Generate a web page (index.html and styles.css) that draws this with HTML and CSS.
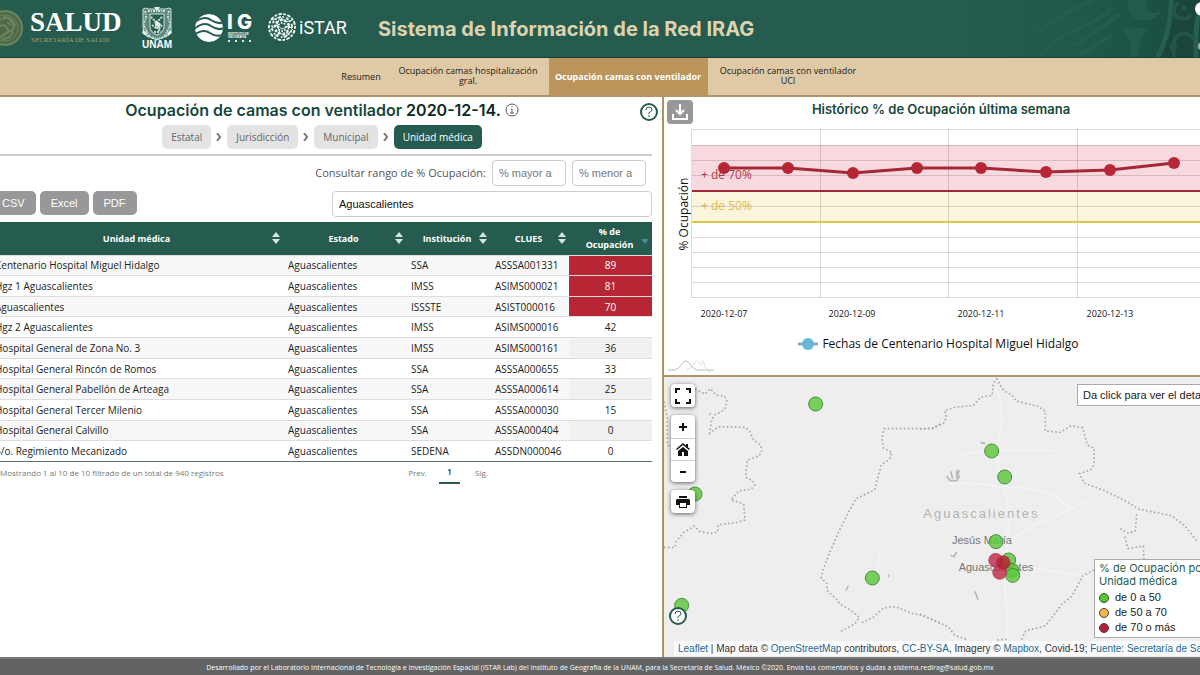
FILE: index.html
```html
<!DOCTYPE html>
<html lang="es">
<head>
<meta charset="utf-8">
<meta name="viewport" content="width=device-width, initial-scale=1">
<title>Sistema de Información de la Red IRAG</title>
<link rel="stylesheet" href="styles.css">
</head>
<body>
<header class="banner">
  <svg class="banner-art" viewBox="0 0 240 58" aria-hidden="true">
    <defs><linearGradient id="shade"><stop offset="0" stop-color="#265c4f"/><stop offset=".55" stop-color="#20574a"/><stop offset="1" stop-color="#184b40"/></linearGradient></defs>
    <path fill="url(#shade)" d="M0 0h240v58H0z"/>
    <g fill="none" stroke="#245d4f" stroke-width="4">
      <path d="M72 34Q90 22 104 14T132 0M76 58Q96 36 118 28T150 8M112 46Q134 34 158 14M118 56L150 36"/>
    </g>
    <path fill="#235c4e" d="M167 0q-2 18 12 20t22-8q-12 4-16-4V0zM160 29h28q-10 8-11 29h-8q4-16-9-29z"/>
    <path fill="#1b443b" d="M213 0h27v58h-38q8-24 11-58z"/>
    <path fill="none" stroke="#265f51" stroke-width="5" d="M211 0q-1 34-14 58M239 10q-4 22-3 48"/>
    <path fill="none" stroke="#23564a" stroke-width="4" d="M218 2q-9 12 0 16q9 3 13-3M214 58q-4-24 10-24q7 1 10 6"/>
    <circle cx="224" cy="8" r="3" fill="#23564a"/><circle cx="213" cy="48" r="4" fill="#23564a"/>
    <circle cx="242" cy="9" r="7" fill="#fff"/><circle cx="242" cy="47" r="4" fill="#9fb3aa"/>
  </svg>
  <svg class="logos" viewBox="0 0 360 58" role="img" aria-label="Salud, UNAM, Instituto de Geografía, iSTAR">
    <g fill="none" stroke="#71835a">
      <circle cx="5" cy="28" r="17" fill="#4b6a49" stroke-width="2"/>
      <circle cx="5" cy="28" r="13" stroke-width="1"/>
      <path stroke-width="2" d="M0 20q8-5 12 2t-2 9q-7 3-10 7M3 17q10 0 12 9M-1 27q5-4 8 1t-5 8M13 31q-2 8-11 8M7 22l4 3"/>
    </g>
    <text class="logo-salud" x="30" y="31">SALUD</text>
    <text class="logo-salud-sub" x="31" y="42">SECRETARÍA DE SALUD</text>
    <g fill="none" stroke="#cfe0da">
      <path fill="#5d887c" stroke-width="1" d="M143 9q3-2 5 0h18q3-2 5 0v17q1 7-4 10l-10 4-10-4q-5-4-4-10z"/>
      <path stroke-width="2" stroke-dasharray="2 1 1 1" d="M145 11q2 5 0 9t0 8 5 9M169 11q-2 5 0 9t0 8-5 9M148 11h18M147 36l10 3 10-3"/>
      <path fill="#285e50" d="M150 14h14v13q-1 6-7 8-6-2-7-8z"/>
      <path stroke-width="2" stroke-dasharray="2 1" d="M151 17l4 4 2 7 4 4M162 17l-4 4M152 25l4 3M162 25l-3 4M154 32h6"/>
      <path fill="#e8f2ee" stroke="none" d="M156 20l5 4-2 4-4-3zM154 7h6l-3 4zM143 30l4 3-1 3-4-3zM171 30l-4 3 1 3 4-3z"/>
    </g>
    <text class="logo-unam" x="142" y="48">UNAM</text>
    <clipPath id="globe"><circle cx="209" cy="28" r="14"/></clipPath>
    <g clip-path="url(#globe)">
      <circle cx="209" cy="28" r="14" fill="#fff"/>
      <path fill="none" stroke="#265c4f" stroke-width="2" d="M194 23q10-8 17-3t13 2M194 29q10-8 17-3t13 2M194 35q9-7 16-2t14 1"/>
    </g>
    <text class="logo-ig" x="227" y="29">I</text><text class="logo-ig" x="237" y="29">G</text>
    <text class="logo-tiny" x="228" y="35">INSTITUTO DE</text><text class="logo-tiny" x="228" y="38">GEOGRAFÍA</text>
    <path stroke="#dce9e4" stroke-width="2" stroke-dasharray="2 5" d="M228 41h24"/>
    <g fill="none" stroke="#eef6f3" stroke-linecap="round">
      <circle cx="282" cy="27" r="13" stroke-width="2" stroke-dasharray="1 3 2 3"/>
      <circle cx="282" cy="27" r="10" stroke-width="2" stroke-dasharray="0 4 1 3"/>
      <circle cx="282" cy="27" r="7" stroke-width="3" stroke-dasharray="0 5 0 4"/>
      <circle cx="282" cy="27" r="4" stroke-width="2" stroke-dasharray="0 3"/>
      <path stroke-width="1" d="M272 20l8-3 6 5 6-2M271 29l6-4 5 4 7-3 4 4M275 36l5-3 6 4 4-5M280 17l-3 8 3 8M289 26l-3 11"/>
    </g>
    <text class="logo-istar" x="299" y="34">iSTAR</text>
  </svg>
  <h1 class="banner-title">Sistema de Información de la Red IRAG</h1>
</header>
<nav class="tabs">
  <a class="tab tab-short" href="#resumen">Resumen</a>
  <a class="tab" href="#hospitalizacion">Ocupación camas hospitalización gral.</a>
  <a class="tab tab-active" href="#ventilador">Ocupación camas con ventilador</a>
  <a class="tab" href="#uci">Ocupación camas con ventilador UCI</a>
</nav>
<main class="board">
  <section class="listing">
    <button class="help" type="button" aria-label="Ayuda"><svg viewBox="0 0 18 18"><circle cx="9" cy="9" r="8"/><path d="M6 7q0-3 3-3t3 3q0 1-2 2t-1 2M9 12v2"/></svg></button>
    <h2 class="title">Ocupación de camas con ventilador <span class="title-date">2020-12-14.</span>
      <svg class="info" viewBox="0 0 14 14" aria-hidden="true"><circle cx="7" cy="7" r="6"/><path d="M7 3v1M6 6h1v4M5 10h4"/></svg></h2>
    <div class="levels">
      <button class="level" type="button">Estatal</button><svg class="chevron" viewBox="0 0 6 8"><path d="M1 0l3 4-3 4"/></svg>
      <button class="level" type="button">Jurisdicción</button><svg class="chevron" viewBox="0 0 6 8"><path d="M1 0l3 4-3 4"/></svg>
      <button class="level" type="button">Municipal</button><svg class="chevron" viewBox="0 0 6 8"><path d="M1 0l3 4-3 4"/></svg>
      <button class="level level-active" type="button">Unidad médica</button>
    </div>
    <div class="range">
      <label for="min">Consultar rango de % Ocupación:</label>
      <input class="field" id="min" placeholder="% mayor a">
      <input class="field" id="max" placeholder="% menor a" aria-label="% menor a">
    </div>
    <div class="tools">
      <button class="export" type="button">CSV</button><button class="export" type="button">Excel</button><button class="export" type="button">PDF</button>
      <input class="field search" type="text" value="Aguascalientes" aria-label="Buscar">
    </div>
    <table class="units">
      <colgroup><col><col class="c-state"><col class="c-inst"><col class="c-clues"><col class="c-occ"></colgroup>
      <thead><tr>
        <th>Unidad médica<svg class="sort" viewBox="0 0 8 12"><path d="M4 0l4 5H0zM4 12l4-5H0z"/></svg></th>
        <th>Estado<svg class="sort" viewBox="0 0 8 12"><path d="M4 0l4 5H0zM4 12l4-5H0z"/></svg></th>
        <th>Institución<svg class="sort" viewBox="0 0 8 12"><path d="M4 0l4 5H0zM4 12l4-5H0z"/></svg></th>
        <th>CLUES<svg class="sort" viewBox="0 0 8 12"><path d="M4 0l4 5H0zM4 12l4-5H0z"/></svg></th>
        <th>% de Ocupación<svg class="sort sort-on" viewBox="0 0 8 12"><path d="M4 12l4-5H0z"/></svg></th>
      </tr></thead>
      <tbody>
        <tr><td>Centenario Hospital Miguel Hidalgo</td><td>Aguascalientes</td><td>SSA</td><td>ASSSA001331</td><td class="high">89</td></tr>
        <tr><td>Hgz 1 Aguascalientes</td><td>Aguascalientes</td><td>IMSS</td><td>ASIMS000021</td><td class="high">81</td></tr>
        <tr><td>Aguascalientes</td><td>Aguascalientes</td><td>ISSSTE</td><td>ASIST000016</td><td class="high">70</td></tr>
        <tr><td>Hgz 2 Aguascalientes</td><td>Aguascalientes</td><td>IMSS</td><td>ASIMS000016</td><td>42</td></tr>
        <tr><td>Hospital General de Zona No. 3</td><td>Aguascalientes</td><td>IMSS</td><td>ASIMS000161</td><td>36</td></tr>
        <tr><td>Hospital General Rincón de Romos</td><td>Aguascalientes</td><td>SSA</td><td>ASSSA000655</td><td>33</td></tr>
        <tr><td>Hospital General Pabellón de Arteaga</td><td>Aguascalientes</td><td>SSA</td><td>ASSSA000614</td><td>25</td></tr>
        <tr><td>Hospital General Tercer Milenio</td><td>Aguascalientes</td><td>SSA</td><td>ASSSA000030</td><td>15</td></tr>
        <tr><td>Hospital General Calvillo</td><td>Aguascalientes</td><td>SSA</td><td>ASSSA000404</td><td>0</td></tr>
        <tr><td>4/o. Regimiento Mecanizado</td><td>Aguascalientes</td><td>SEDENA</td><td>ASSDN000046</td><td>0</td></tr>
      </tbody>
    </table>
    <div class="pager">
      <span class="pager-info">Mostrando 1 al 10 de 10 filtrado de un total de 940 registros</span>
      <button class="page" type="button">Prev.</button><button class="page page-on" type="button">1</button><button class="page" type="button">Sig.</button>
    </div>
  </section>
  <div class="side">
    <section class="history">
      <button class="download" type="button" aria-label="Descargar"><svg viewBox="0 0 16 16"><path d="M8 0v10M4 6l4 4 4-4M1 10v5h14v-5"/></svg></button>
      <h2 class="history-title">Histórico % de Ocupación última semana</h2>
      <svg class="plot" viewBox="0 0 536 202" role="img" aria-label="Histórico de ocupación">
        <path fill="#f8d9df" d="M28 18h508v46H28z"/><path fill="#fbf5dc" d="M28 64h508v31H28z"/>
        <g class="grid"><path d="M28 2.500h508M28 18.500h508M28 33.500h508M28 48.500h508M28 79.500h508M28 110.500h508M28 125.500h508M28 140.500h508M28 155.500h508M28 170.500h508M27.500 2v169M156.500 2v169M284.500 2v169M413.500 2v169"/></g>
        <path stroke="#9f2936" stroke-width="2" d="M28 64h508"/><path stroke="#dfc84a" stroke-width="2" d="M28 95h508"/>
        <text class="band-high" x="37" y="52">+ de 70%</text><text class="band-mid" x="37" y="83">+ de 50%</text>
        <polyline class="series" points="60,41 124,41 189,46 253,41 317,41 382,45 446,43 510,36"/>
        <g fill="#b62635"><circle cx="60" cy="41" r="6"/><circle cx="124" cy="41" r="6"/><circle cx="189" cy="46" r="6"/><circle cx="253" cy="41" r="6"/><circle cx="317" cy="41" r="6"/><circle cx="382" cy="45" r="6"/><circle cx="446" cy="43" r="6"/><circle cx="510" cy="36" r="6"/></g>
        <text class="axis" text-anchor="middle" transform="translate(24 87) rotate(-90)">% Ocupación</text>
        <g class="tick"><text x="60" y="190">2020-12-07</text><text x="188" y="190">2020-12-09</text><text x="317" y="190">2020-12-11</text><text x="446" y="190">2020-12-13</text></g>
      </svg>
      <div class="legend-line"><svg viewBox="0 0 20 12" aria-hidden="true"><path stroke="#8da9b8" stroke-width="3" d="M0 6h20"/><circle cx="10" cy="6" r="6" fill="#67b7dc"/></svg>Fechas de Centenario Hospital Miguel Hidalgo</div>
      <svg class="brand" viewBox="0 0 46 14" aria-hidden="true"><path fill="none" stroke="#b5bdc3" d="M0 12h6q4 0 8-6t8 0 7 6h17"/><path fill="none" stroke="#dde1e4" d="M18 12q6-1 8-6t5-1 3-1 3 4 7 4"/></svg>
    </section>
    <section class="map">
      <svg class="terrain" viewBox="0 0 1608 840" preserveAspectRatio="xMinYMin slice" role="img" aria-label="Mapa de Aguascalientes">
        <path fill="#eee" d="M0 0h1608v840H0z"/>
        <g class="roads"><path d="M995 30q25 60 15 130l-15 70q10 60 30 120t-5 240q10 100 10 210M850 320q80-6 160 10 70 0 110 10 60 10 100 60M880 240q70-24 130-20h160M1030 500q70-60 160-90l90-40M640 620q0-60 10-110M1030 560q120 20 250 40M60 240q40 60 30 160"/></g>
        <g class="border">
          <path transform="translate(-12 -21)" d="M12 95l10 50 0 80 14 10M105 58l30 14 16-16 18 20 24 2 8 16-8 26-28 14-10 14 -6 42 18-14 14-6 74 2 14 12 12 26 22 16 2 22-10 10-32 12-4 26-2 26 18 8 10 14-12 14-36 4-24 28 38 12 4 48-26 8-54 6-2 22-20 4-34-6-16-16-32 20-22 26-4 18H12M840 162l-22 14H672l-6 28 4 30 26 14-8 20-24 16-20 76-56 26-22 40-30 60-26 60-22 56-4 22 16 16 2 22 26 24 12 16 34 20 24 20-14 20-44 24M606 758l34-16 30-28 36-4 50 20 30 6 60 26"/>
          <path transform="translate(768 -21)" d="M0 177l34-2 36-14 10-20-6-20 34-10 52-4 22-26 34-4 4-38 10-12 12 20 10 16 24 12 12 18 66 16 22 14 0 60 44 4 34-20 34 6 14 52 20 10 0 50-10 14-34 12 14 28 60 22 80 40 22 16 40 8 60 12 40 30 40 50M650 432l-4 50-20 8-26-14M614 500l10 36 46-8 2 40M522 600l-34 18-32 60-30 24-50 66-58 14-14 28M0 732l84 38 20 26 36 12M232 810l28-2"/>
        </g>
        <g fill="none" stroke="#b5b8ba" stroke-width="5" transform="translate(768 -21)"><path d="M80 318l10 14h20l10-16M92 304l6 22M110 300v24l8-24M182 218l14 2M92 556l10 4 8-14M164 664l6 14 4 12"/></g>
        <g fill="none" stroke="#b5b8ba" stroke-width="4"><path d="M545 642l8-16M675 592l-2 8M134 114l8-6"/></g>
        <text class="state" x="778" y="424">Aguascalientes</text>
        <text class="city" x="864" y="502">Jesús María</text><text class="city" x="884" y="583">Aguascalientes</text>
        <g class="green"><circle cx="455" cy="81" r="21"/><circle cx="93" cy="351" r="21"/><circle cx="625" cy="603" r="21"/><circle cx="53" cy="685" r="21"/><circle cx="983" cy="222" r="21"/><circle cx="1022" cy="300" r="21"/><circle cx="996" cy="494" r="21"/><circle cx="1034" cy="549" r="21"/><circle cx="1044" cy="580" r="21"/><circle cx="1046" cy="595" r="21"/></g>
        <g class="red"><circle cx="995" cy="550" r="21"/><circle cx="1007" cy="586" r="21"/><circle class="deep" cx="1018" cy="557" r="21"/></g>
      </svg>
      <div class="controls">
        <div class="control"><button type="button" aria-label="Pantalla completa"><svg viewBox="0 0 18 18"><path class="thick" d="M2 6V2h4M12 2h4v4M16 12v4h-4M6 16H2v-4"/></svg></button></div>
        <div class="control"><button type="button" aria-label="Acercar"><svg viewBox="0 0 18 18"><path class="thick" d="M5 9h8M9 5v8"/></svg></button><button type="button" aria-label="Inicio"><svg viewBox="0 0 18 18"><path d="M9 2l7 6-1 1-6-5-6 5-1-1zM12 3h2v4l-2-2zM9 6l5 4v5h-4v-4H8v4H4v-5z"/></svg></button><button type="button" aria-label="Alejar"><svg viewBox="0 0 18 18"><path class="thick" d="M6 9h6"/></svg></button></div>
        <div class="control"><button type="button" aria-label="Imprimir"><svg viewBox="0 0 18 18"><path fill-rule="evenodd" d="M5 3h8v2H5zM3 6h12l1 1v5h-3v3H5v-3H2V7zM6 10v4h6v-4z"/></svg></button></div>
      </div>
      <button class="help map-help" type="button" aria-label="Ayuda del mapa"><svg viewBox="0 0 18 18"><circle cx="9" cy="9" r="8"/><path d="M6 7q0-3 3-3t3 3q0 1-2 2t-1 2M9 12v2"/></svg></button>
      <div class="hint">Da click para ver el detalle</div>
      <div class="key">
        <h3 class="key-title">% de Ocupación por<br>Unidad médica</h3>
        <ul class="key-list"><li><i class="dot dot-low"></i>de 0 a 50</li><li><i class="dot dot-mid"></i>de 50 a 70</li><li><i class="dot dot-high"></i>de 70 o más</li></ul>
      </div>
      <div class="credits"><a href="#leaflet">Leaflet</a> | Map data © <a href="#osm">OpenStreetMap</a> contributors, <a href="#cc">CC-BY-SA</a>, Imagery © <a href="#mapbox">Mapbox</a>, Covid-19; <a href="#fuente">Fuente: Secretaría de Salud 2020</a></div>
    </section>
  </div>
</main>
<footer class="foot">Desarrollado por el Laboratorio Internacional de Tecnología e Investigación Espacial (iSTAR Lab) del Instituto de Geografía de la UNAM, para la Secretaría de Salud. México ©2020. Envía tus comentarios y dudas a sistema.redirag@salud.gob.mx</footer>
</body>
</html>
```
FILE: styles.css
```css
* { box-sizing: border-box; }
body {
  margin: 0;
  min-height: 100vh;
  display: flex;
  flex-direction: column;
  overflow-x: hidden;
  background: #fff;
  color: #222;
  font: 10px/14px "Open Sans", "Noto Sans", sans-serif;
}
button, input { font: inherit; color: inherit; margin: 0; }
button { border: 0; padding: 0; background: none; }
svg { display: block; }
h1, h2, h3 { margin: 0; }

.banner {
  position: relative;
  display: flex;
  align-items: center;
  height: 58px;
  background: #265c4f;
  border-bottom: 1px solid #173f35;
}
.banner-art { position: absolute; right: 0; top: 0; height: 57px; }
.logos { width: 360px; height: 58px; flex: none; overflow: hidden; }
.logos text { fill: #fff; }
.logo-salud { font: bold 27px "Liberation Serif", serif; }
.logos .logo-salud-sub { font: 7px "Liberation Serif", serif; fill: #a79b62; }
.logo-unam { font: bold 10px "Liberation Sans", sans-serif; }
.logo-ig { font: 800 20px Inter, sans-serif; }
.logo-tiny { font: bold 3px "Liberation Sans", sans-serif; }
.logo-istar { font: 400 18px Roboto, sans-serif; }
.banner-title {
  position: relative;
  margin-left: 18px;
  color: #ddd3b0;
  font: 700 20px/24px Inter, sans-serif;
}

.tabs {
  display: flex;
  justify-content: center;
  height: 39px;
  padding-left: 3px;
  background: #e0c9a5;
  border-bottom: 2px solid #b3936a;
}
.tab {
  display: flex;
  align-items: center;
  justify-content: center;
  width: 161px;
  padding: 0 6px 2px;
  color: #222;
  font-size: 9px;
  line-height: 10px;
  text-align: center;
  text-decoration: none;
}
.tab-short { width: 53px; padding: 0; }
.tab-active { width: 159px; padding-bottom: 0; background: #bc955c; color: #fff; font-weight: 700; white-space: nowrap; }

.board { flex: 1; display: grid; grid-template-columns: 83fr 67fr; }
.listing {
  position: relative;
  min-width: 0;
  overflow: hidden;
  border-right: 2px solid #aa965f;
  padding: 2px 10px 0 0;
}
.title {
  display: flex;
  align-items: center;
  justify-content: center;
  gap: 4px;
  margin-right: 8px;
  color: #17483c;
  font: 600 16px/22px Inter, sans-serif;
}
.title-date { color: #0d2a23; }
.info { width: 14px; height: 14px; fill: none; stroke: #555; }
.help { position: absolute; right: 4px; top: 6px; width: 18px; height: 18px; }
.help svg { fill: #fff; stroke: #265c4f; stroke-width: 2; }
.help path { fill: none; stroke-width: 1; }
.levels {
  display: flex;
  align-items: center;
  justify-content: center;
  gap: 5px;
  padding: 4px 8px 5px 0;
  border-bottom: 2px solid #ccc;
}
.level { height: 24px; padding: 0 9px; border-radius: 5px; background: #e3e3e4; color: #666; }
.level-active { background: #265c4f; color: #fff; }
.chevron { width: 6px; height: 8px; fill: none; stroke: #777; stroke-width: 2; }
.range {
  display: flex;
  align-items: center;
  justify-content: flex-end;
  gap: 6px;
  padding: 4px 6px 5px 0;
  color: #555;
  font-size: 11px;
}
.field {
  width: 74px;
  height: 26px;
  padding: 0 6px;
  border: 1px solid #ccc;
  border-radius: 4px;
  background: #fff;
  font: 11px "Liberation Sans", sans-serif;
}
.field::placeholder { color: #777; opacity: 1; }
.tools { display: flex; align-items: flex-start; gap: 4px; margin-left: -9px; }
.export {
  height: 24px;
  padding: 0 11px;
  border-radius: 5px;
  background: #98989b;
  color: #fff;
  font: 11px "Liberation Sans", sans-serif;
}
.search { width: 320px; margin-left: auto; color: #111; }

.units {
  width: calc(100% + 8px);
  height: 240px;
  margin: 5px 0 0 -8px;
  table-layout: fixed;
  border-collapse: collapse;
  border-bottom: 1px solid #59736b;
}
.c-state { width: 123px; }
.c-inst { width: 84px; }
.c-clues { width: 79px; }
.c-occ { width: 83px; }
.units th {
  position: relative;
  height: 33px;
  padding: 0 12px 0 10px;
  background: #265c4f;
  color: #fff;
  font-size: 9px;
  line-height: 13px;
}
.sort { position: absolute; right: 3px; top: 10px; width: 8px; height: 12px; fill: #d9e4e0; }
.sort-on { fill: #4d8394; }
.units td { padding: 0 5px; line-height: 14px; border-top: 1px solid #ddd; white-space: nowrap; }
.units td:first-child { padding-left: 3px; }
.units td:last-child { text-align: center; }
.units tbody tr:nth-child(odd) { background: #f8f8f8; }
.units tbody tr:nth-child(odd) td:last-child { background: #f1f1f1; }
.units tbody tr:nth-child(n) td.high:last-child { background: #b62635; color: #fff; }

.pager { display: flex; align-items: center; margin-right: 160px; color: #777; font-size: 8px; }
.pager-info { margin-right: auto; }
.page { height: 22px; min-width: 21px; margin-left: 11px; }
.page-on { border-bottom: 2px solid #265c4f; color: #222; font-weight: 600; }

.side { display: flex; flex-direction: column; min-width: 0; overflow: hidden; }
.history { position: relative; border-bottom: 2px solid #b3936a; }
.download { position: absolute; left: 3px; top: 3px; width: 26px; height: 24px; padding: 4px 5px; border-radius: 4px; background: #98989b; }
.download svg { fill: none; stroke: #fff; stroke-width: 2; }
.history-title {
  padding: 1px 0 7px 18px;
  color: #17483c;
  font: 600 13px/22px Inter, sans-serif;
  text-align: center;
}
.plot { width: 100%; }
.grid { fill: none; stroke: #000; stroke-opacity: .14; }
.series { fill: none; stroke: #a42835; stroke-width: 3; }
.band-high { font-size: 12px; fill: #b33a47; }
.band-mid { font-size: 12px; fill: #dcb950; }
.axis { font-size: 12px; fill: #111; }
.tick { font-size: 9px; fill: #111; text-anchor: middle; }
.legend-line { display: flex; align-items: center; justify-content: center; gap: 4px; padding: 6px 0 6px 13px; color: #111; font-size: 12px; line-height: 18px; }
.legend-line svg { width: 20px; height: 12px; }
.brand { width: 46px; height: 14px; margin: -1px 0 3px 4px; }

.map { position: relative; flex: 1; min-height: 280px; overflow: hidden; font-family: "Liberation Sans", sans-serif; }
.terrain { position: absolute; inset: 0; width: 100%; height: 100%; }
.roads { fill: none; stroke: #f4f4f4; stroke-width: 5; }
.border { fill: none; stroke: #a9a9ab; stroke-width: 5; stroke-dasharray: 5 7; }
.state { font-size: 39px; letter-spacing: 6px; fill: #b3b3b3; }
.city { font-size: 33px; fill: #777; }
.green { fill: #5cc83c; fill-opacity: .82; stroke: #4f8a40; stroke-width: 3; }
.red { fill: #c22a4b; fill-opacity: .82; stroke: #a44057; stroke-width: 2; }
.deep { fill: #b51f2c; }
.controls { position: absolute; left: 7px; top: 7px; display: grid; gap: 8px; }
.control { width: 24px; border-radius: 4px; background: #fff; box-shadow: 0 1px 4px #0009; }
.control button { display: grid; place-items: center; width: 24px; height: 23px; }
.control button + button { border-top: 1px solid #ccc; height: 22px; }
.control svg { width: 18px; height: 18px; fill: #111; }
.control .thick { fill: none; stroke: #111; stroke-width: 2; }
.map-help { left: 5px; top: 230px; right: auto; }
.hint { position: absolute; left: 413px; top: 7px; padding: 2px 5px; border: 1px solid #aaa; background: #fff; font-size: 11px; line-height: 16px; white-space: nowrap; }
.key { position: absolute; left: 430px; bottom: 19px; padding: 2px 4px; border: 1px solid #aaa; background: #fff; font-size: 11px; white-space: nowrap; }
.key-title { color: #265c4f; font: 400 11px/13px Inter, sans-serif; }
.key-list { list-style: none; margin: 2px 0 0; padding: 0; line-height: 15px; }
.key-list li { display: flex; align-items: center; gap: 6px; }
.dot { width: 10px; height: 10px; border: 1px solid #444; border-radius: 50%; }
.dot-low { background: #55c72f; }
.dot-mid { background: #f5b74a; }
.dot-high { background: #b91d35; }
.credits { position: absolute; left: 10px; right: 0; bottom: 1px; padding-left: 4px; overflow: hidden; background: #ffffffb3; color: #333; line-height: 15px; white-space: nowrap; }
.credits a { color: #226a94; text-decoration: none; }

.foot { padding: 2px 0; border-top: 2px solid #777; background: #626363; color: #fff; font-size: 7px; line-height: 14px; text-align: center; }
```
